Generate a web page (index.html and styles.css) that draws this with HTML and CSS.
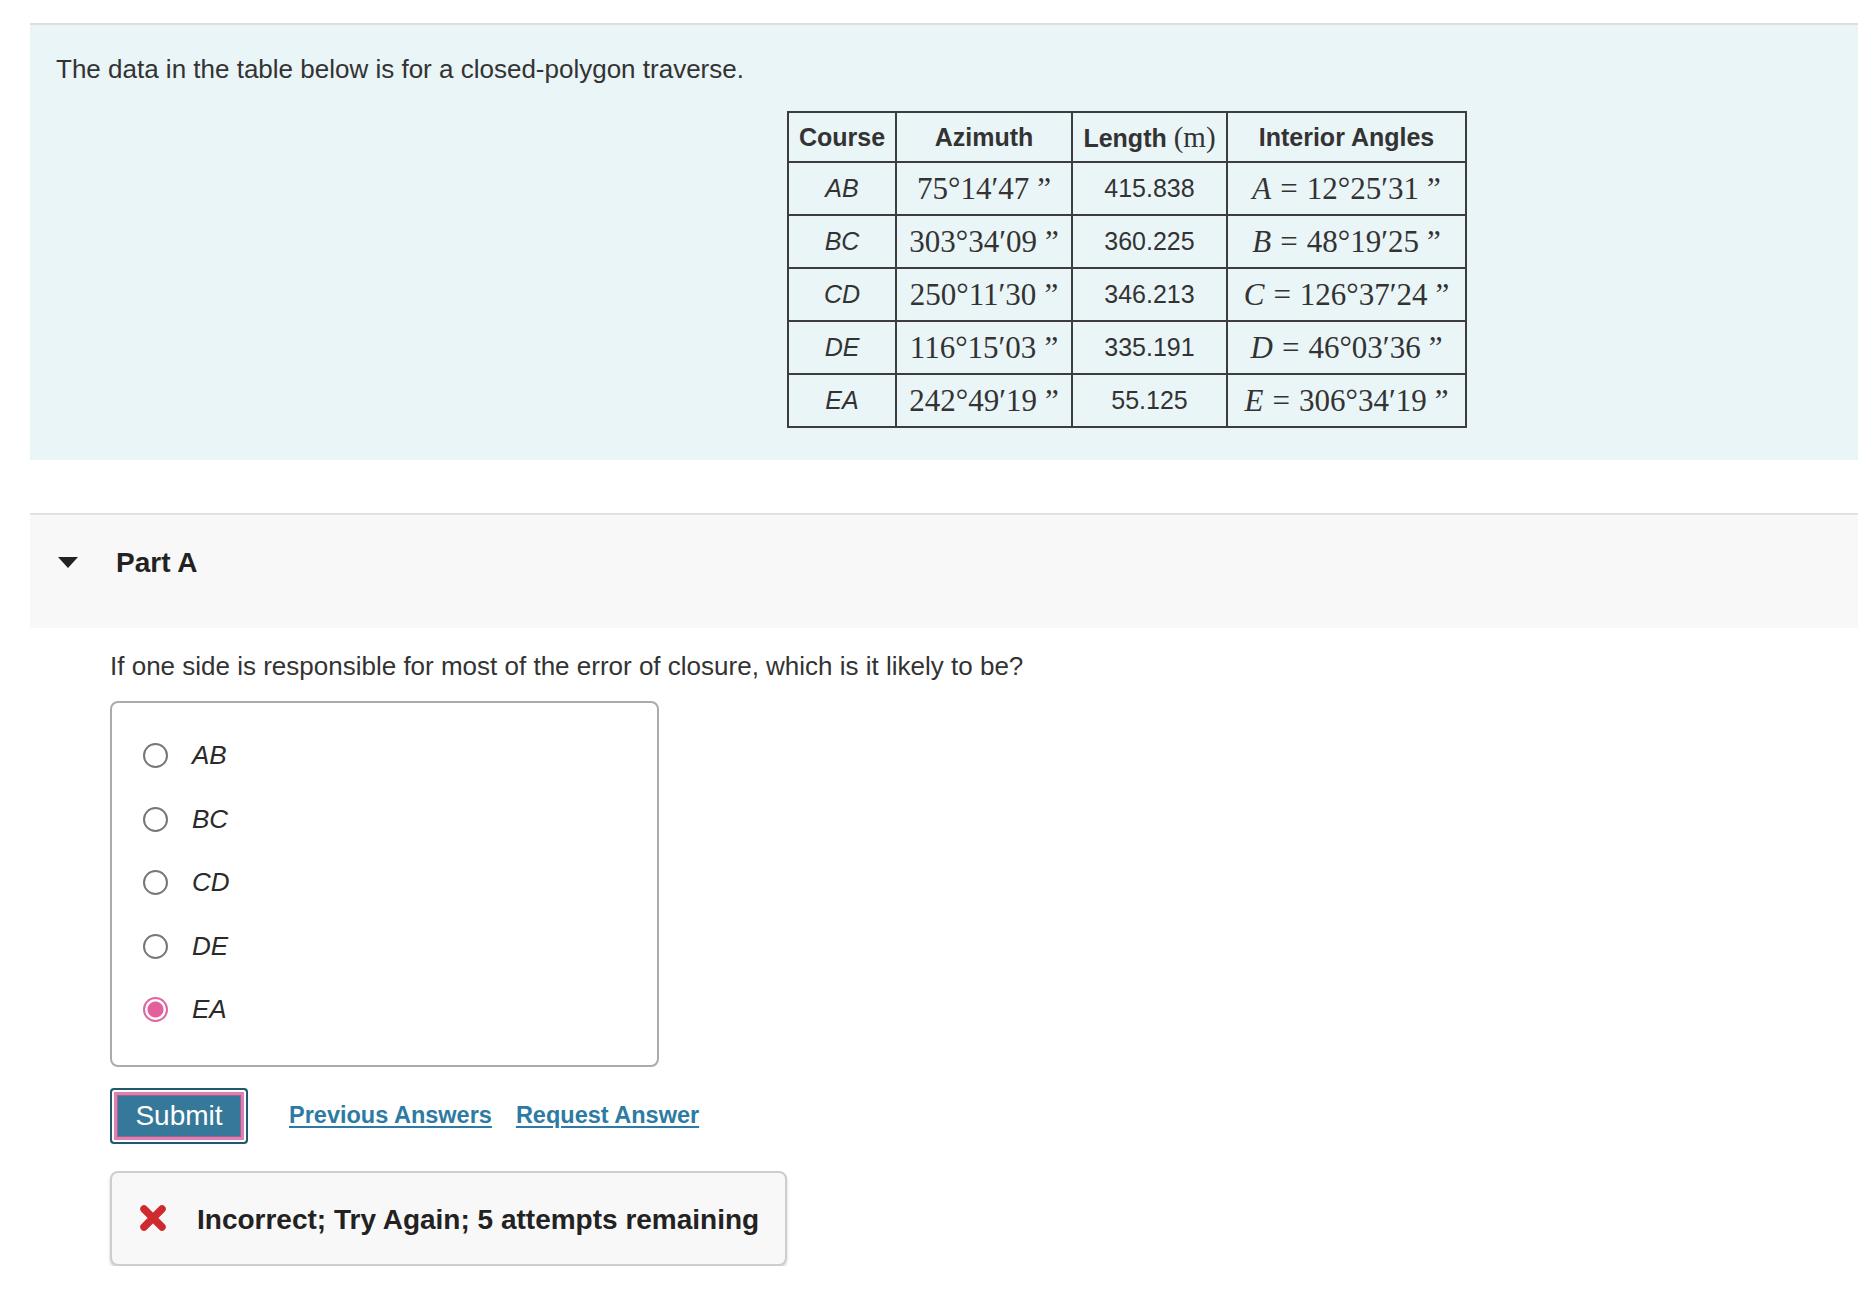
FILE: index.html
```html
<!DOCTYPE html>
<html>
<head>
<meta charset="utf-8">
<link rel="stylesheet" href="styles.css">
</head>
<body>
<div class="page">
  <section class="intro">
    <p class="lead">The data in the table below is for a closed-polygon traverse.</p>
    <table class="traverse">
      <colgroup>
        <col class="c-course"><col class="c-az"><col class="c-len"><col class="c-int">
      </colgroup>
      <thead>
        <tr><th>Course</th><th>Azimuth</th><th>Length <span class="m mh">(m)</span></th><th>Interior Angles</th></tr>
      </thead>
      <tbody>
        <tr><td class="course">AB</td><td><span class="m">75°14′47<span class="q">”</span></span></td><td class="len">415.838</td><td><span class="m"><i>A</i><span class="eq">=</span>12°25′31<span class="q">”</span></span></td></tr>
        <tr><td class="course">BC</td><td><span class="m">303°34′09<span class="q">”</span></span></td><td class="len">360.225</td><td><span class="m"><i>B</i><span class="eq">=</span>48°19′25<span class="q">”</span></span></td></tr>
        <tr><td class="course">CD</td><td><span class="m">250°11′30<span class="q">”</span></span></td><td class="len">346.213</td><td><span class="m"><i>C</i><span class="eq">=</span>126°37′24<span class="q">”</span></span></td></tr>
        <tr><td class="course">DE</td><td><span class="m">116°15′03<span class="q">”</span></span></td><td class="len">335.191</td><td><span class="m"><i>D</i><span class="eq">=</span>46°03′36<span class="q">”</span></span></td></tr>
        <tr><td class="course">EA</td><td><span class="m">242°49′19<span class="q">”</span></span></td><td class="len">55.125</td><td><span class="m"><i>E</i><span class="eq">=</span>306°34′19<span class="q">”</span></span></td></tr>
      </tbody>
    </table>
  </section>

  <section class="part">
    <div class="part-head">
      <span class="caret"></span>
      <h2>Part A</h2>
    </div>
    <div class="part-body">
      <p class="question">If one side is responsible for most of the error of closure, which is it likely to be?</p>
      <div class="choices">
        <label class="choice"><input type="radio" name="side"><span>AB</span></label>
        <label class="choice"><input type="radio" name="side"><span>BC</span></label>
        <label class="choice"><input type="radio" name="side"><span>CD</span></label>
        <label class="choice"><input type="radio" name="side"><span>DE</span></label>
        <label class="choice"><input type="radio" name="side" checked><span>EA</span></label>
      </div>
      <div class="actions">
        <button class="submit" type="button">Submit</button>
        <a class="link" href="#">Previous Answers</a>
        <a class="link" href="#">Request Answer</a>
      </div>
      <div class="feedback">
        <svg class="xicon" width="28" height="28" viewBox="0 0 28 28"><path d="M5 5 L23 23 M23 5 L5 23" stroke="#cf2a2f" stroke-width="7.5" stroke-linecap="round" fill="none"/></svg>
        <span class="fb-text">Incorrect; Try Again; 5 attempts remaining</span>
      </div>
    </div>
  </section>
</div>
</body>
</html>
```

FILE: styles.css
```css
* { box-sizing: border-box; }
html, body { margin: 0; padding: 0; background: #fff; }
body {
  font-family: "Liberation Sans", Arial, Helvetica, sans-serif;
  color: #333;
  font-size: 26px;
}
.page {
  padding: 23px 0 0 30px;
}
.intro {
  border-top: 2px solid #dedede;
  background: #eaf5f7;
  padding: 27px 0 32px 26px;
}
.lead {
  margin: 0;
  line-height: 35px;
}
.traverse {
  margin: 24px 0 0 731px;
  border-collapse: collapse;
  table-layout: fixed;
  width: 678px;
}
.c-course { width: 108px; }
.c-az { width: 176px; }
.c-len { width: 155px; }
.c-int { width: 239px; }
.traverse th, .traverse td {
  border: 2px solid #3d3d3d;
  text-align: center;
  padding: 0;
  color: #333;
  white-space: nowrap;
  font-size: 25px;
}
.traverse th {
  height: 50px;
  font-weight: bold;
}
.traverse td {
  height: 53px;
}
.course { font-style: italic; }
.m {
  font-family: "Liberation Serif", "DejaVu Serif", serif;
  font-size: 31px;
  font-weight: normal;
}
.m i { font-style: italic; }
.mh { font-size: 29px; }
.eq { margin: 0 9px; }
.q { margin-left: 8px; }

.part { margin-top: 53px; }
.part-head {
  border-top: 2px solid #e2e2e2;
  background: #f8f8f8;
  height: 115px;
  padding: 31px 0 0 28px;
  display: flex;
  align-items: flex-start;
}
.caret {
  width: 0;
  height: 0;
  border-left: 10px solid transparent;
  border-right: 10px solid transparent;
  border-top: 11px solid #222;
  margin-top: 11px;
}
.part-head h2 {
  margin: 0 0 0 38px;
  font-size: 28px;
  line-height: 34px;
  font-weight: bold;
  color: #222;
}
.part-body {
  padding-left: 80px;
}
.question {
  margin: 21px 0 0;
  line-height: 35px;
}
.choices {
  margin-top: 17px;
  width: 549px;
  border: 2px solid #ababab;
  border-radius: 8px;
  padding: 21px 0 23px 31px;
}
.choice {
  display: flex;
  align-items: center;
  height: 63.5px;
  font-style: italic;
  color: #2a2a2a;
}
.choice input {
  appearance: none;
  -webkit-appearance: none;
  margin: 0 24px 0 0;
  width: 25px;
  height: 25px;
  border: 2px solid #777;
  border-radius: 50%;
  background: #fff;
  flex: none;
}
.choice input:checked {
  border-color: #e2639f;
  background: radial-gradient(circle, #e3609d 0 7.5px, #fff 8.5px);
}
.actions {
  margin-top: 21px;
  display: flex;
  align-items: center;
}
.submit {
  width: 138px;
  height: 56px;
  border: 2px solid #1f5a72;
  border-radius: 4px;
  background: #35789a;
  box-shadow: inset 0 0 0 2px #fff, inset 0 0 0 5px #e07fb1, inset 0 0 0 6px #9b6391;
  color: #fff;
  font-family: "Liberation Sans", Arial, sans-serif;
  font-size: 28px;
  padding: 0;
}
.link {
  font-size: 23.5px;
  font-weight: bold;
  color: #2d7ba2;
  text-decoration: underline;
  text-decoration-thickness: 2px;
  text-underline-offset: 3px;
  margin-left: 24px;
}
.submit + .link { margin-left: 41px; }
.feedback {
  margin-top: 27px;
  width: 677px;
  height: 95px;
  border: 2px solid #cdcdcd;
  border-radius: 8px;
  background: #f8f8f8;
  box-shadow: 0 2px 3px rgba(0,0,0,0.18);
  display: flex;
  align-items: center;
  padding: 4px 0 0 27px;
}
.xicon { flex: none; margin-top: -4px; }
.fb-text {
  margin-left: 30px;
  font-size: 28px;
  font-weight: bold;
  color: #222;
}
```
